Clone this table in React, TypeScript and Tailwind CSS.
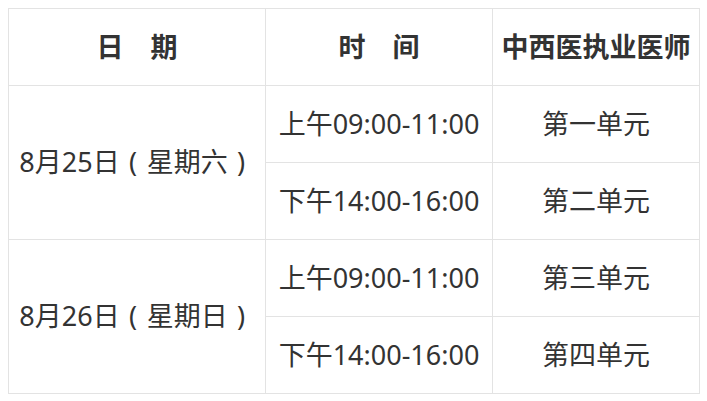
import React from "react"

const rows = [
  { day: "8月25日", week: "星期六", slots: [["上午09:00-11:00", "第一单元"], ["下午14:00-16:00", "第二单元"]] },
  { day: "8月26日", week: "星期日", slots: [["上午09:00-11:00", "第三单元"], ["下午14:00-16:00", "第四单元"]] },
]

const cell = "border border-[#e3e3e3] text-center align-middle px-2"

function Paren({ c }: { c: string }) {
  return <span className="inline-block w-[1em] text-center">{c}</span>
}

export default function App() {
  return (
    <div
      className="w-[707px] h-[401px] bg-white text-[#333] overflow-hidden"
      style={{ fontFamily: '"Noto Sans", "Noto Sans CJK SC", sans-serif' }}
    >
      {/* line above, cut off by the screenshot */}
      <div className="h-2 overflow-hidden">
        <p className="-mt-[22px] pl-[28px] text-[20px] leading-[24px] whitespace-nowrap">
          二、2018年中西医执业医师医学综合笔试考试时间安排如下：
        </p>
      </div>
      <table className="ml-2 w-[691px] border-collapse table-fixed text-[27px]">
        <colgroup>
          <col className="w-[257px]" />
          <col className="w-[227px]" />
          <col className="w-[207px]" />
        </colgroup>
        <thead>
          <tr className="h-[77px]">
            <th className={`${cell} font-bold`}>日　期</th>
            <th className={`${cell} font-bold`}>时　间</th>
            <th className={`${cell} font-bold whitespace-nowrap px-0`}>中西医执业医师</th>
          </tr>
        </thead>
        <tbody>
          {rows.map((r) =>
            r.slots.map(([time, unit], i) => (
              <tr key={r.day + i} className="h-[77px]">
                {i === 0 && (
                  <td rowSpan={2} className={`${cell} whitespace-nowrap px-0`}>
                    {r.day}
                    <Paren c="(" />
                    {r.week}
                    <Paren c=")" />
                  </td>
                )}
                <td className={`${cell} whitespace-nowrap px-0`}>{time}</td>
                <td className={cell}>{unit}</td>
              </tr>
            ))
          )}
        </tbody>
      </table>
    </div>
  )
}
